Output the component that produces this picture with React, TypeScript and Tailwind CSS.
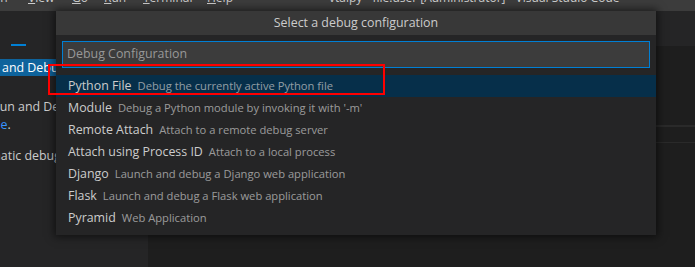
const font = { fontFamily: '"Open Sans", "Noto Sans", sans-serif' };

const options = [
  { label: "Python File", desc: "Debug the currently active Python file" },
  { label: "Module", desc: "Debug a Python module by invoking it with '-m'" },
  { label: "Remote Attach", desc: "Attach to a remote debug server" },
  { label: "Attach using Process ID", desc: "Attach to a local process" },
  { label: "Django", desc: "Launch and debug a Django web application" },
  { label: "Flask", desc: "Launch and debug a Flask web application" },
  { label: "Pyramid", desc: "Web Application" },
];

function TitleBar() {
  return (
    <div className="h-[11px] bg-[#3c3c3c] overflow-hidden text-[12px] leading-[16px] text-[#cccccc] whitespace-nowrap">
      <div className="flex -mt-[10px]">
        <span className="ml-[-43px] w-[71px] shrink-0">Selection</span>
        <span className="w-[44px] shrink-0"><u>V</u>iew</span>
        <span className="w-[32px] shrink-0"><u>G</u>o</span>
        <span className="w-[39px] shrink-0"><u>R</u>un</span>
        <span className="w-[64px] shrink-0"><u>T</u>erminal</span>
        <span className="w-[122px] shrink-0"><u>H</u>elp</span>
        <span className="shrink-0">vtaipy - file.user [Administrator] - Visual Studio Code</span>
      </div>
    </div>
  );
}

function Sidebar() {
  return (
    <div className="w-[148px] shrink-0 bg-[#252526] text-[12.4px] whitespace-nowrap">
      <div className="mt-[33px] ml-[11px] w-[15px] h-[2px] bg-[#007fd4]" />
      <div className="mt-[13px] h-[17px] bg-[#0e639c] text-white leading-[17px] overflow-hidden">
        <span className="ml-[-24px]">Run and Debug</span>
      </div>
      <div className="w-[56px] overflow-hidden">
        <div className="mt-[22px] leading-[18px] text-[#cccccc]">
          <div className="ml-[-8px]">Run and Debug</div>
          <div className="ml-[-10px] text-[#3794ff]">
            file<span className="text-[#cccccc]">.</span>
          </div>
        </div>
        <div className="mt-[13px] leading-[18px] text-[#cccccc] ml-[-37px]">
          automatic debug
        </div>
      </div>
    </div>
  );
}

function Editor() {
  return (
    <div className="flex-1 flex flex-col bg-[#1e1e1e]">
      <div className="h-[35px] bg-[#252526]" />
      <div className="mt-[79px] h-[2px] bg-[#2a2a2a]" />
      <div className="mt-[15px] h-[1px] bg-[#2a2a2a]" />
    </div>
  );
}

function QuickPick() {
  return (
    <div className="absolute left-[56px] top-[11px] w-[600px] bg-[#252526] pb-[6px] shadow-[0_0_8px_2px_rgba(0,0,0,0.55)]">
      <div className="h-[24px] bg-[#383838] flex items-center justify-center text-[12.4px] text-[#cccccc]">
        Select a debug configuration
      </div>
      <div className="px-[6px] pt-[6px]">
        <div className="h-[27px] border border-[#007fd4] bg-[#3c3c3c] flex items-center pl-[4px] text-[12.4px] text-[#989898]">
          Debug Configuration
        </div>
      </div>
      <div className="mt-[7px]">
        {options.map((o, i) => (
          <div
            key={o.label}
            className={`h-[22px] flex items-center pl-[12px] whitespace-nowrap ${i === 0 ? "bg-[#062f4a]" : ""}`}
          >
            <span className="text-[12.4px] text-[#cccccc]">{o.label}</span>
            <span className="ml-[6px] text-[11.2px] text-[#cccccc] opacity-70">{o.desc}</span>
          </div>
        ))}
      </div>
    </div>
  );
}

export default function App() {
  return (
    <div className="relative w-[695px] h-[267px] overflow-hidden bg-[#1e1e1e] flex flex-col" style={font}>
      <TitleBar />
      <div className="flex flex-1">
        <Sidebar />
        <Editor />
      </div>
      <QuickPick />
      {/* red annotation box */}
      <div className="absolute left-[48px] top-[64px] w-[337px] h-[31px] border-2 border-[#ff0000]" />
    </div>
  );
}
